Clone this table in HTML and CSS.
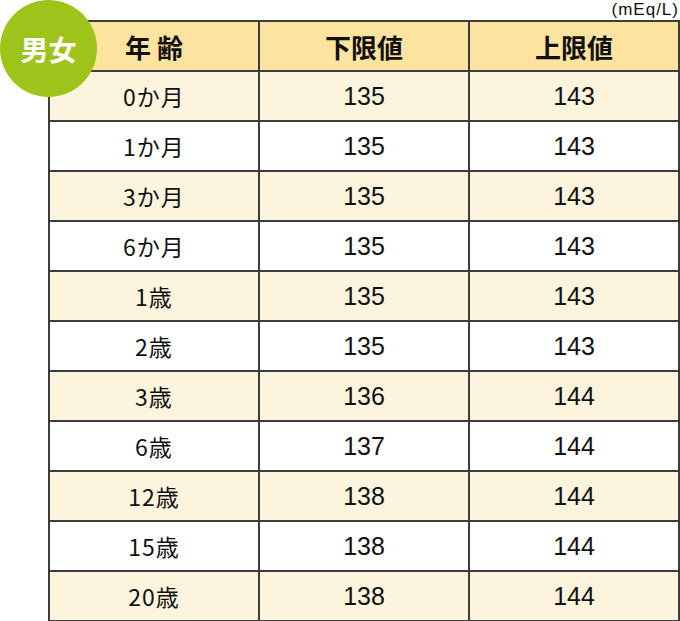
FILE: index.html
```html
<!DOCTYPE html>
<html lang="ja">
<head>
<meta charset="utf-8">
<link rel="stylesheet" href="styles.css">
</head>
<body>
<div class="wrap">
  <div class="unit">(mEq/L)</div>
  <div class="badge">男女</div>
  <table class="tbl">
    <thead>
      <tr><th>年 齢</th><th>下限値</th><th>上限値</th></tr>
    </thead>
    <tbody>
      <tr class="odd"><td class="age">0か月</td><td>135</td><td>143</td></tr>
      <tr><td class="age">1か月</td><td>135</td><td>143</td></tr>
      <tr class="odd"><td class="age">3か月</td><td>135</td><td>143</td></tr>
      <tr><td class="age">6か月</td><td>135</td><td>143</td></tr>
      <tr class="odd"><td class="age">1歳</td><td>135</td><td>143</td></tr>
      <tr><td class="age">2歳</td><td>135</td><td>143</td></tr>
      <tr class="odd"><td class="age">3歳</td><td>136</td><td>144</td></tr>
      <tr><td class="age">6歳</td><td>137</td><td>144</td></tr>
      <tr class="odd"><td class="age">12歳</td><td>138</td><td>144</td></tr>
      <tr><td class="age">15歳</td><td>138</td><td>144</td></tr>
      <tr class="odd"><td class="age">20歳</td><td>138</td><td>144</td></tr>
    </tbody>
  </table>
</div>
</body>
</html>
```
FILE: styles.css
```css
html, body {
  margin: 0;
  padding: 0;
  background: #fff;
}
body {
  font-family: "Liberation Sans", "Noto Sans CJK JP", sans-serif;
  color: #111;
}
.wrap {
  position: relative;
  width: 680px;
  padding-left: 48px;
  box-sizing: border-box;
}
.unit {
  height: 20px;
  text-align: right;
  font-size: 17px;
  line-height: 20px;
  letter-spacing: 1px;
  padding-right: 1px;
}
.badge {
  position: absolute;
  left: 0;
  top: 0;
  width: 97px;
  height: 97px;
  border-radius: 50%;
  background: #9ec41c;
  color: #fff;
  font-family: "Noto Sans CJK JP", sans-serif;
  font-weight: 700;
  font-size: 28px;
  display: flex;
  align-items: center;
  justify-content: center;
  z-index: 2;
}
.tbl {
  width: 632px;
  border-collapse: collapse;
  table-layout: fixed;
  font-size: 25px;
}
.tbl th, .tbl td {
  border: 2px solid #3d3d3d;
  height: 48px;
  padding: 0;
  text-align: center;
  vertical-align: middle;
}
.tbl th {
  background: #fde3a0;
  font-weight: 700;
  font-family: "Noto Sans CJK JP", sans-serif;
  font-size: 26px;
}
.tbl td {
  background: #fff;
}
.tbl td.age {
  font-family: "Noto Sans CJK JP", sans-serif;
  font-size: 23px;
  letter-spacing: 1px;
}
.tbl tr.odd td {
  background: #fdf4dd;
}
```
